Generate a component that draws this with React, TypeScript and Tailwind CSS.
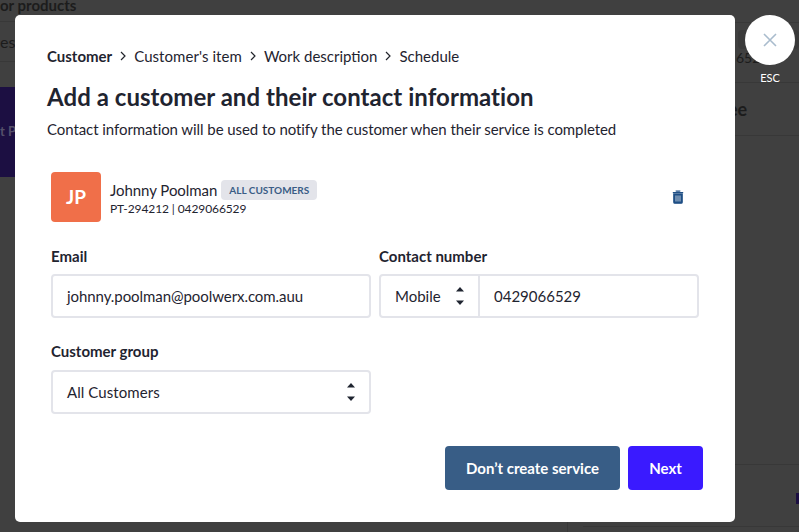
import React from "react";

const Chevrons = () => (
  <svg width="10" height="24" viewBox="0 0 10 24" className="shrink-0">
    <path d="M5 3 L9 7.5 H1 Z" fill="#1f2430" />
    <path d="M5 21 L1 16.5 H9 Z" fill="#1f2430" />
  </svg>
);

const Sep = () => (
  <svg width="8" height="10" viewBox="0 0 8 10" className="mx-[7px] shrink-0">
    <path d="M2 1 L6 5 L2 9" fill="none" stroke="#22252c" strokeWidth="1.2" />
  </svg>
);

// the page behind the dimmed overlay, only its edges show around the modal
const Background = () => (
  <div className="flex h-[532px] w-full flex-col overflow-hidden bg-[#404040] text-[#1c1c1c]">
    <div className="flex h-[522px] justify-between">
      <div className="w-[80px]">
        <div className="h-[22px] whitespace-nowrap border-b border-[#383838] text-[15px] font-bold leading-[11px]">
          or products
        </div>
        <div className="flex h-[40px] items-center whitespace-nowrap border-b border-[#383838] text-[16px]">
          <span className="-ml-[7px]">ses</span>
        </div>
        <div className="mt-[25px] flex h-[90px] items-center whitespace-nowrap bg-[#1c0f42] text-[13px] font-bold text-[#55506a]">
          t Pr
        </div>
      </div>
      <div className="w-[64px]">
        <div className="h-[23px] border-b border-[#383838]" />
        <div className="h-[60px] border-b border-[#383838] pt-[7px]">
          <div className="ml-[3px] h-[19px] rounded-[4px] bg-[#3a3a3a]" />
          <div className="ml-[1px] text-[14px] leading-[18px]">652</div>
        </div>
        <div className="h-[53px] border-b border-[#383838] pt-[15px] text-[18px] font-bold leading-[22px]">
          <span className="-ml-[7px]">ee</span>
        </div>
        <div className="mt-[328px] border-b border-[#383838]" />
        <div className="mt-[28px] flex justify-end">
          <div className="h-[11px] w-[3px] bg-[#1c0f42]" />
        </div>
      </div>
    </div>
    <div className="flex h-[10px] pl-[567px]">
      <div className="border-l border-[#383838]" />
      <div className="ml-[15px] mt-[4px] h-0 flex-1 border-b border-[#383838]" />
    </div>
  </div>
);

export default function App() {
  return (
    <div className="relative h-[532px] w-[799px] overflow-hidden font-['Lato',sans-serif]">
      <Background />

      <div className="absolute left-[15px] top-[15px] flex h-[507px] w-[720px] flex-col rounded-[5px] bg-white pl-[32px] pr-[32px] text-[#1f2430]">
        <div className="mt-[31px] flex h-[20px] items-center text-[15px] leading-[20px]">
          <span className="font-bold">Customer</span>
          <Sep />
          <span className="tracking-[0.06px]">Customer's item</span>
          <Sep />
          <span>Work description</span>
          <Sep />
          <span>Schedule</span>
        </div>
        <h1 className="mt-[15px] text-[24px] font-bold leading-[32px] tracking-[0.045px]">
          Add a customer and their contact information
        </h1>
        <p className="mt-[6px] text-[15px] leading-[20px] tracking-[-0.07px]">
          Contact information will be used to notify the customer when their service is completed
        </p>

        <div className="ml-[4px] mt-[33px] flex h-[50px] items-start">
          <div className="flex h-[50px] w-[50px] items-center justify-center rounded-[4px] bg-[#f06f49] text-[19px] font-bold text-white">
            JP
          </div>
          <div className="ml-[9px] mt-[8px]">
            <div className="flex h-[20px] items-center">
              <span className="text-[15px] leading-[20px] tracking-[-0.05px]">Johnny Poolman</span>
              <span className="ml-[4px] rounded-[4px] bg-[#e3e4ea] px-[8px] text-[10px] font-bold leading-[20px] text-[#3a5d86]">
                ALL CUSTOMERS
              </span>
            </div>
            <div className="mt-[1px] text-[12px] leading-[16px] tracking-[-0.1px]">PT-294212 | 0429066529</div>
          </div>
          <svg width="12" height="14" viewBox="0 0 12 14" className="ml-auto mr-[19px] mt-[18px]">
            <path
              d="M4.2 1.5 V1 H7.8 V1.5 M0.8 2.6 H11.2 M1.8 4 V12.2 Q1.8 13.2 2.8 13.2 H9.2 Q10.2 13.2 10.2 12.2 V4 Z"
              fill="#1f4f85"
              stroke="#1f4f85"
              strokeWidth="1.2"
            />
            <path d="M4 5.5 V11.5 M6 5.5 V11.5 M8 5.5 V11.5" stroke="#ffffff" strokeWidth="0.7" />
          </svg>
        </div>

        <div className="ml-[4px] mt-[24px] flex gap-[8px]">
          <div className="w-[320px]">
            <div className="text-[15px] font-bold leading-[20px]">Email</div>
            <div className="mt-[8px] flex h-[44px] items-center rounded-[4px] border-2 border-[#e3e4ea] pl-[14px] text-[15px] tracking-[-0.065px]">
              johnny.poolman@poolwerx.com.auu
            </div>
          </div>
          <div className="w-[320px]">
            <div className="text-[15px] font-bold leading-[20px]">Contact number</div>
            <div className="mt-[8px] flex h-[44px] items-center rounded-[4px] border-2 border-[#e3e4ea] text-[15px]">
              <div className="flex h-full w-[99px] items-center justify-between border-r-2 border-[#e3e4ea] pl-[14px] pr-[13px]">
                <span>Mobile</span>
                <Chevrons />
              </div>
              <span className="pl-[14px]">0429066529</span>
            </div>
          </div>
        </div>

        <div className="ml-[4px] mt-[23px] w-[320px]">
          <div className="text-[15px] font-bold leading-[20px]">Customer group</div>
          <div className="mt-[9px] flex h-[44px] items-center justify-between rounded-[4px] border-2 border-[#e3e4ea] pl-[14px] pr-[13px] text-[15px]">
            <span className="tracking-[0.08px]">All Customers</span>
            <Chevrons />
          </div>
        </div>

        <div className="mt-[32px] flex justify-end gap-[8px]">
          <button className="h-[44px] w-[175px] rounded-[4px] bg-[#385d86] text-[15px] font-bold text-white">
            Don’t create service
          </button>
          <button className="h-[44px] w-[75px] rounded-[4px] bg-[#3a1aff] text-[15px] font-bold text-white">
            Next
          </button>
        </div>
      </div>

      <div className="absolute left-[745px] top-[15px] flex w-[50px] flex-col items-center">
        <div className="flex h-[50px] w-[50px] items-center justify-center rounded-full bg-white">
          <svg width="16" height="16" viewBox="0 0 16 16">
            <path d="M2 2 L14 14 M14 2 L2 14" stroke="#a9bccd" strokeWidth="1.6" fill="none" />
          </svg>
        </div>
        <span className="mt-[5px] text-[11px] leading-[16px] text-white">ESC</span>
      </div>
    </div>
  );
}
